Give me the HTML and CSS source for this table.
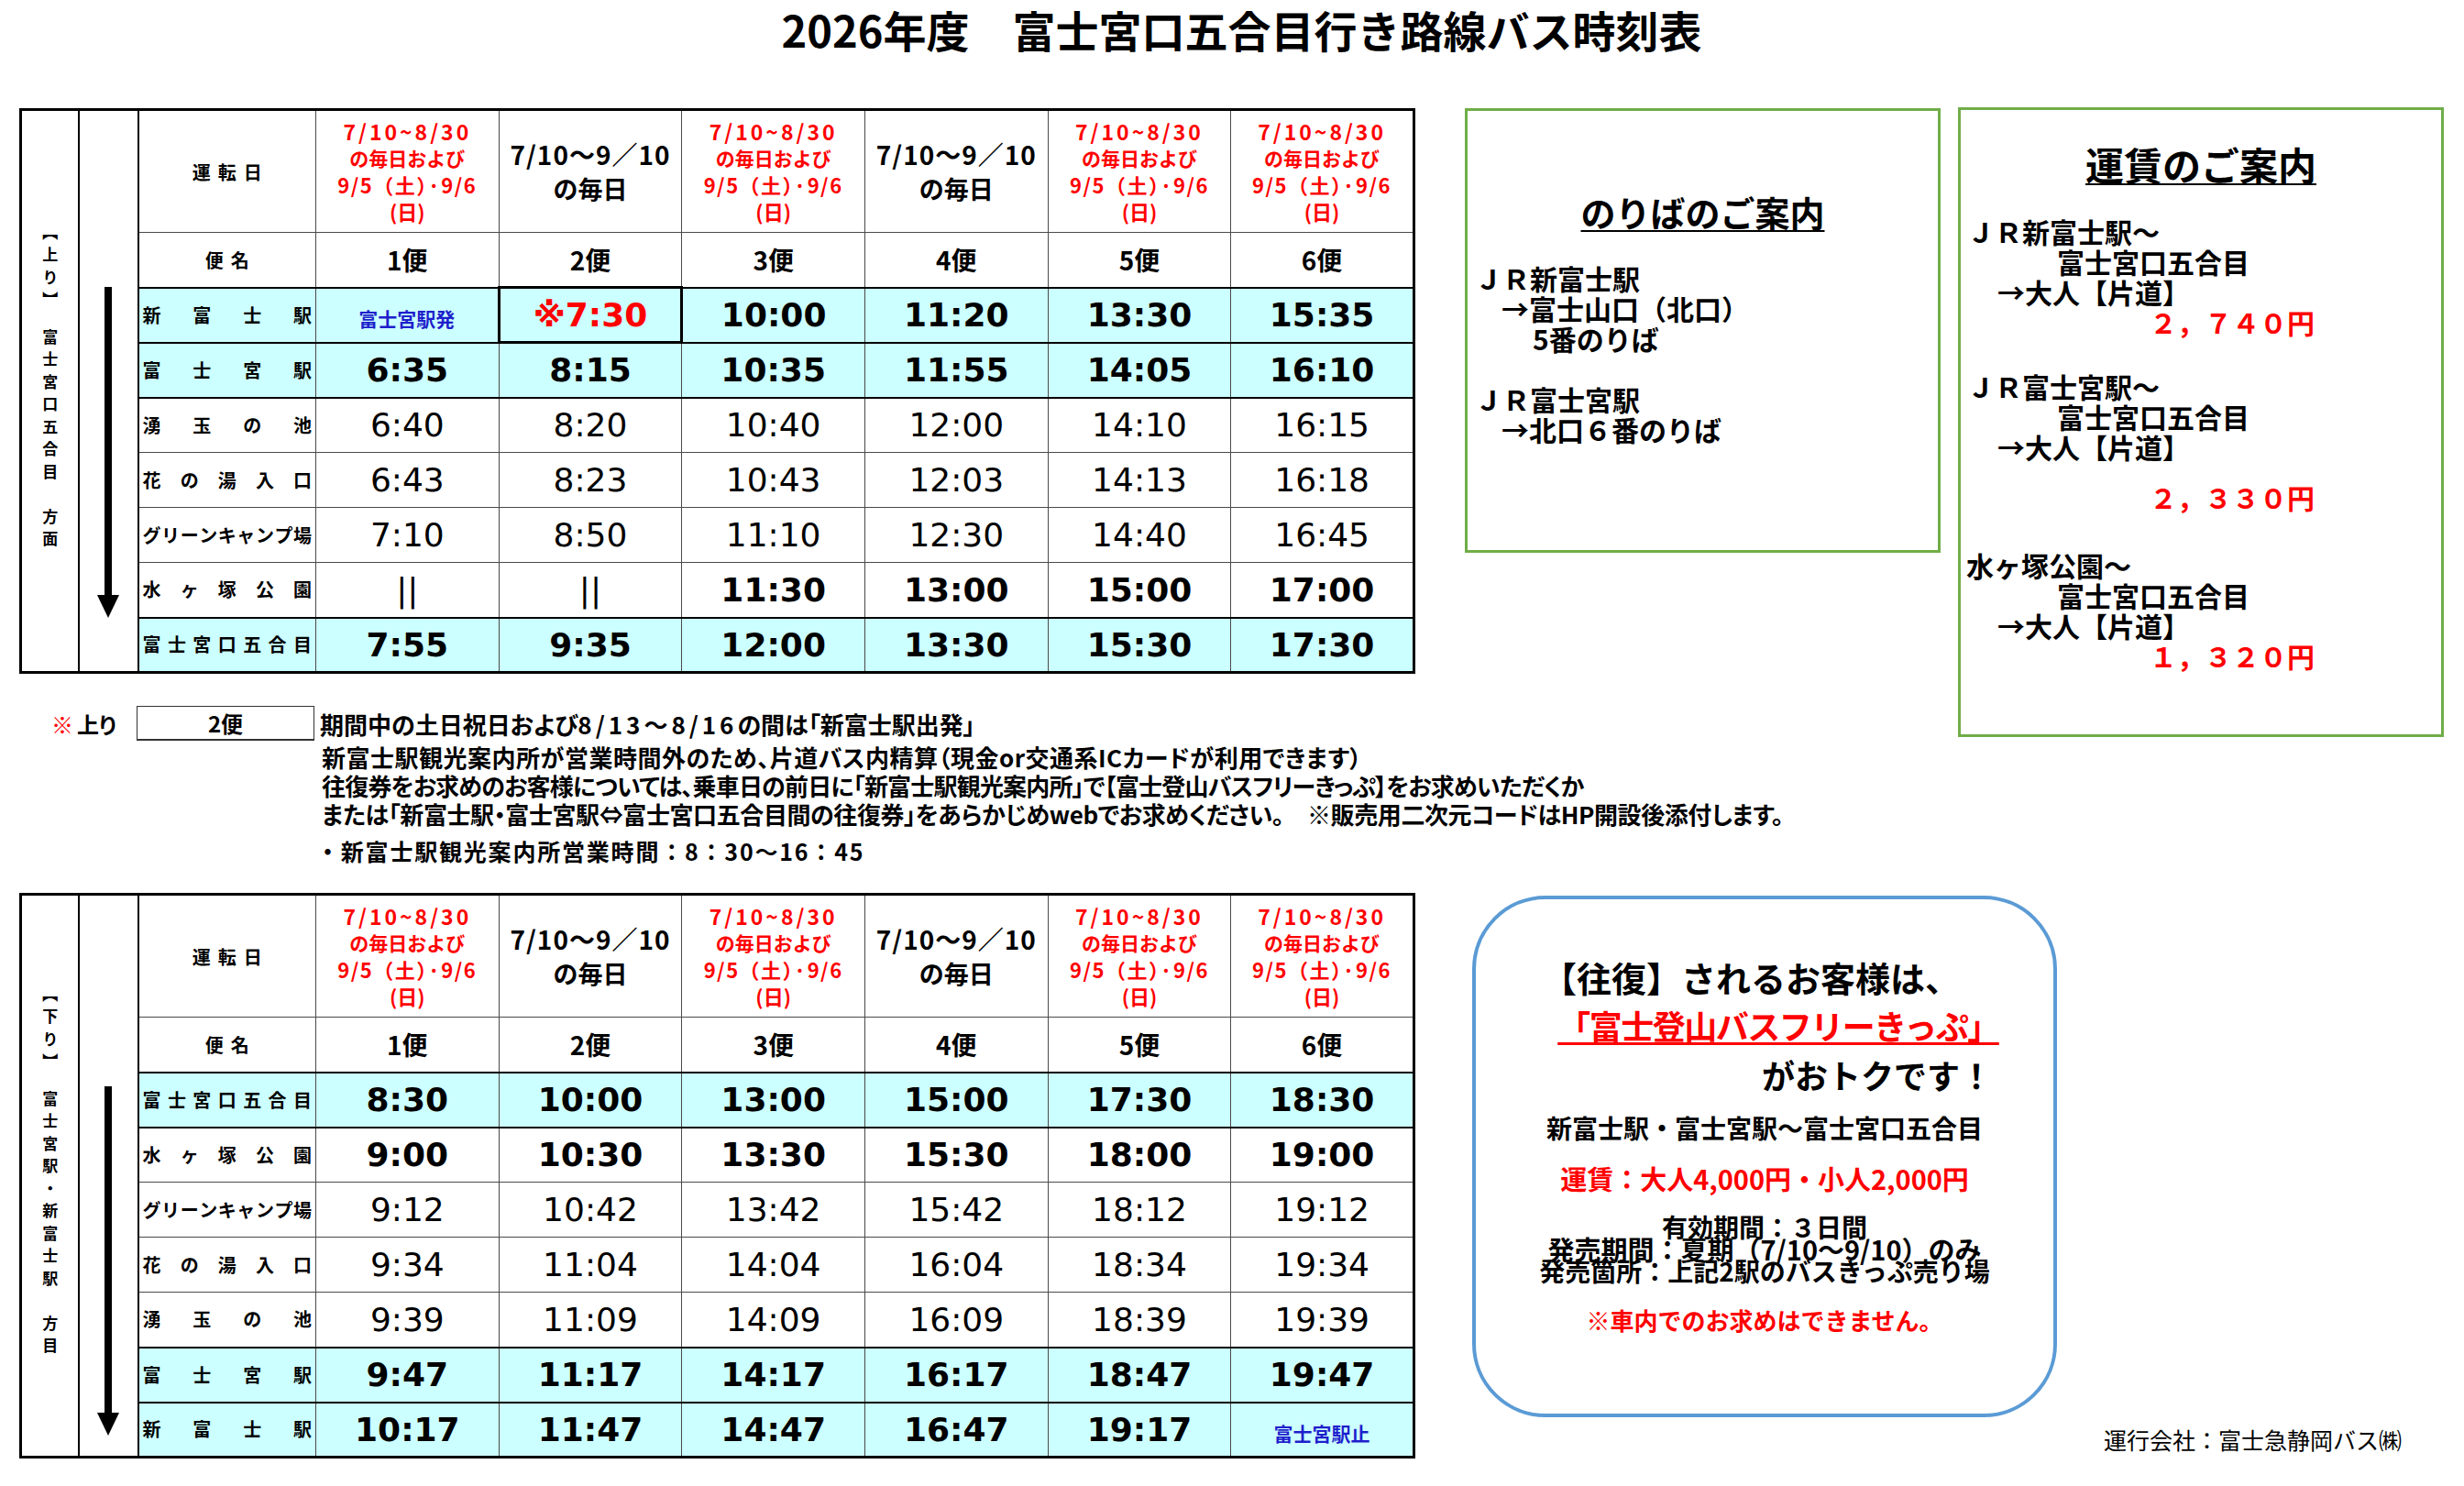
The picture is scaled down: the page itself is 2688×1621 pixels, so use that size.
FILE: index.html
```html
<!DOCTYPE html>
<html lang="ja">
<head>
<meta charset="utf-8">
<title>2026年度 富士宮口五合目行き路線バス時刻表</title>
<link rel="stylesheet" href="styles.css">
</head>
<body>
<div class="page">
  <h1 class="title">2026年度　富士宮口五合目行き路線バス時刻表</h1>

  <table class="tt up-table">
    <colgroup>
      <col class="c-dir"><col class="c-arrow"><col class="c-stn">
      <col class="c-t"><col class="c-t"><col class="c-t"><col class="c-t"><col class="c-t"><col class="c-t">
    </colgroup>
    <tr class="r-head">
      <td class="dir" rowspan="9"><span class="vtext">【上り】　富士宮口五合目　方面</span></td>
      <td class="arrow arrow-up" rowspan="9"><svg class="arr" width="24" height="361" viewBox="0 0 24 361"><rect x="8" y="0" width="8" height="340"/><polygon points="0,336 24,336 12,361"/></svg></td>
      <th class="lbl">運転日</th>
      <td class="day red"><span class="d1">7/10~8/30</span><span class="d2">の毎日および</span><span class="d3">9/5（土）·9/6</span><span class="d4">(日)</span></td>
      <td class="day"><span class="e1">7/10～9／10</span><span class="e2">の毎日</span></td>
      <td class="day red"><span class="d1">7/10~8/30</span><span class="d2">の毎日および</span><span class="d3">9/5（土）·9/6</span><span class="d4">(日)</span></td>
      <td class="day"><span class="e1">7/10～9／10</span><span class="e2">の毎日</span></td>
      <td class="day red"><span class="d1">7/10~8/30</span><span class="d2">の毎日および</span><span class="d3">9/5（土）·9/6</span><span class="d4">(日)</span></td>
      <td class="day red"><span class="d1">7/10~8/30</span><span class="d2">の毎日および</span><span class="d3">9/5（土）·9/6</span><span class="d4">(日)</span></td>
    </tr>
    <tr class="r-bin">
      <th class="lbl">便名</th><td>1便</td><td>2便</td><td>3便</td><td>4便</td><td>5便</td><td>6便</td>
    </tr>
    <tr class="r-t cy b tk">
      <th class="stn"><div class="sp"><span>新</span><span>富</span><span>士</span><span>駅</span></div></th>
      <td><span class="blue">富士宮駅発</span></td><td class="star">※7:30</td><td>10:00</td><td>11:20</td><td>13:30</td><td>15:35</td>
    </tr>
    <tr class="r-t cy b tk">
      <th class="stn"><div class="sp"><span>富</span><span>士</span><span>宮</span><span>駅</span></div></th>
      <td>6:35</td><td>8:15</td><td>10:35</td><td>11:55</td><td>14:05</td><td>16:10</td>
    </tr>
    <tr class="r-t tk">
      <th class="stn"><div class="sp"><span>湧</span><span>玉</span><span>の</span><span>池</span></div></th>
      <td>6:40</td><td>8:20</td><td>10:40</td><td>12:00</td><td>14:10</td><td>16:15</td>
    </tr>
    <tr class="r-t">
      <th class="stn"><div class="sp"><span>花</span><span>の</span><span>湯</span><span>入</span><span>口</span></div></th>
      <td>6:43</td><td>8:23</td><td>10:43</td><td>12:03</td><td>14:13</td><td>16:18</td>
    </tr>
    <tr class="r-t">
      <th class="stn"><div class="sp"><span>グ</span><span>リ</span><span>ー</span><span>ン</span><span>キ</span><span>ャ</span><span>ン</span><span>プ</span><span>場</span></div></th>
      <td>7:10</td><td>8:50</td><td>11:10</td><td>12:30</td><td>14:40</td><td>16:45</td>
    </tr>
    <tr class="r-t b">
      <th class="stn"><div class="sp"><span>水</span><span>ヶ</span><span>塚</span><span>公</span><span>園</span></div></th>
      <td class="bars">||</td><td class="bars">||</td><td>11:30</td><td>13:00</td><td>15:00</td><td>17:00</td>
    </tr>
    <tr class="r-t cy b tk">
      <th class="stn"><div class="sp"><span>富</span><span>士</span><span>宮</span><span>口</span><span>五</span><span>合</span><span>目</span></div></th>
      <td>7:55</td><td>9:35</td><td>12:00</td><td>13:30</td><td>15:30</td><td>17:30</td>
    </tr>
  </table>

  <section class="nori">
    <h2 class="box-title">のりばのご案内</h2>
    <p class="ln jr">ＪＲ新富士駅</p>
    <p class="ln i1">→富士山口（北口）</p>
    <p class="ln i2">5番のりば</p>
    <p class="ln blank">&nbsp;</p>
    <p class="ln jr">ＪＲ富士宮駅</p>
    <p class="ln i1">→北口６番のりば</p>
  </section>

  <section class="fare">
    <h2 class="fare-title">運賃のご案内</h2>
    <div class="grp g1">
      <p class="ln jr">ＪＲ新富士駅～</p>
      <p class="ln f-to">富士宮口五合目</p>
      <p class="ln f-ad">→大人【片道】</p>
      <p class="ln f-pr">２，７４０円</p>
    </div>
    <div class="grp g2">
      <p class="ln jr">ＪＲ富士宮駅～</p>
      <p class="ln f-to">富士宮口五合目</p>
      <p class="ln f-ad">→大人【片道】</p>
      <p class="ln f-pr f-gap">２，３３０円</p>
    </div>
    <div class="grp g3">
      <p class="ln f-mz">水ヶ塚公園～</p>
      <p class="ln f-to">富士宮口五合目</p>
      <p class="ln f-ad">→大人【片道】</p>
      <p class="ln f-pr">１，３２０円</p>
    </div>
  </section>

  <section class="notes">
    <div class="n-row1">
      <span class="n-mark">※</span><span class="n-up">上り</span>
      <span class="n-box">2便</span>
      <span class="n-text">期間中の土日祝日および<span class="n-num">8/13～8/16</span>の間は「新富士駅出発」</span>
    </div>
    <p class="n-line n-l2">新富士駅観光案内所が営業時間外のため、片道バス内精算（現金or交通系ICカードが利用できます）</p>
    <p class="n-line n-l3">往復券をお求めのお客様については、乗車日の前日に「新富士駅観光案内所」で【富士登山バスフリーきっぷ】をお求めいただくか</p>
    <p class="n-line n-l4">または「新富士駅・富士宮駅⇔富士宮口五合目間の往復券」をあらかじめwebでお求めください。　※販売用二次元コードはHP開設後添付します。</p>
    <p class="n-line n-last">・新富士駅観光案内所営業時間：8：30～16：45</p>
  </section>

  <table class="tt low-table">
    <colgroup>
      <col class="c-dir"><col class="c-arrow"><col class="c-stn">
      <col class="c-t"><col class="c-t"><col class="c-t"><col class="c-t"><col class="c-t"><col class="c-t">
    </colgroup>
    <tr class="r-head">
      <td class="dir" rowspan="9"><span class="vtext">【下り】　富士宮駅・新富士駅　方目</span></td>
      <td class="arrow arrow-low" rowspan="9"><svg class="arr" width="24" height="381" viewBox="0 0 24 381"><rect x="8" y="0" width="8" height="360"/><polygon points="0,356 24,356 12,381"/></svg></td>
      <th class="lbl">運転日</th>
      <td class="day red"><span class="d1">7/10~8/30</span><span class="d2">の毎日および</span><span class="d3">9/5（土）·9/6</span><span class="d4">(日)</span></td>
      <td class="day"><span class="e1">7/10～9／10</span><span class="e2">の毎日</span></td>
      <td class="day red"><span class="d1">7/10~8/30</span><span class="d2">の毎日および</span><span class="d3">9/5（土）·9/6</span><span class="d4">(日)</span></td>
      <td class="day"><span class="e1">7/10～9／10</span><span class="e2">の毎日</span></td>
      <td class="day red"><span class="d1">7/10~8/30</span><span class="d2">の毎日および</span><span class="d3">9/5（土）·9/6</span><span class="d4">(日)</span></td>
      <td class="day red"><span class="d1">7/10~8/30</span><span class="d2">の毎日および</span><span class="d3">9/5（土）·9/6</span><span class="d4">(日)</span></td>
    </tr>
    <tr class="r-bin">
      <th class="lbl">便名</th><td>1便</td><td>2便</td><td>3便</td><td>4便</td><td>5便</td><td>6便</td>
    </tr>
    <tr class="r-t cy b tk">
      <th class="stn"><div class="sp"><span>富</span><span>士</span><span>宮</span><span>口</span><span>五</span><span>合</span><span>目</span></div></th>
      <td>8:30</td><td>10:00</td><td>13:00</td><td>15:00</td><td>17:30</td><td>18:30</td>
    </tr>
    <tr class="r-t b tk">
      <th class="stn"><div class="sp"><span>水</span><span>ヶ</span><span>塚</span><span>公</span><span>園</span></div></th>
      <td>9:00</td><td>10:30</td><td>13:30</td><td>15:30</td><td>18:00</td><td>19:00</td>
    </tr>
    <tr class="r-t">
      <th class="stn"><div class="sp"><span>グ</span><span>リ</span><span>ー</span><span>ン</span><span>キ</span><span>ャ</span><span>ン</span><span>プ</span><span>場</span></div></th>
      <td>9:12</td><td>10:42</td><td>13:42</td><td>15:42</td><td>18:12</td><td>19:12</td>
    </tr>
    <tr class="r-t">
      <th class="stn"><div class="sp"><span>花</span><span>の</span><span>湯</span><span>入</span><span>口</span></div></th>
      <td>9:34</td><td>11:04</td><td>14:04</td><td>16:04</td><td>18:34</td><td>19:34</td>
    </tr>
    <tr class="r-t">
      <th class="stn"><div class="sp"><span>湧</span><span>玉</span><span>の</span><span>池</span></div></th>
      <td>9:39</td><td>11:09</td><td>14:09</td><td>16:09</td><td>18:39</td><td>19:39</td>
    </tr>
    <tr class="r-t cy b tk">
      <th class="stn"><div class="sp"><span>富</span><span>士</span><span>宮</span><span>駅</span></div></th>
      <td>9:47</td><td>11:17</td><td>14:17</td><td>16:17</td><td>18:47</td><td>19:47</td>
    </tr>
    <tr class="r-t cy b tk">
      <th class="stn"><div class="sp"><span>新</span><span>富</span><span>士</span><span>駅</span></div></th>
      <td>10:17</td><td>11:47</td><td>14:47</td><td>16:47</td><td>19:17</td><td><span class="blue">富士宮駅止</span></td>
    </tr>
  </table>

  <div class="side">
    <section class="promo">
      <p class="p1">【往復】されるお客様は、</p>
      <p class="p2">「富士登山バスフリーきっぷ」</p>
      <p class="p3">がおトクです！</p>
      <p class="p4">新富士駅・富士宮駅～富士宮口五合目</p>
      <p class="p5">運賃：大人4,000円・小人2,000円</p>
      <p class="p6">有効期間：３日間</p>
      <p class="p7">発売期間：夏期（7/10～9/10）のみ</p>
      <p class="p8">発売箇所：上記2駅のバスきっぷ売り場</p>
      <p class="p9">※車内でのお求めはできません。</p>
    </section>
    <p class="company">運行会社：富士急静岡バス㈱</p>
  </div>
</div>
</body>
</html>
```

FILE: styles.css
```css
* { box-sizing: border-box; }
html, body { margin: 0; padding: 0; background: #fff; }
body {
  color: #000;
  font-family: "Noto Sans CJK JP", "Noto Sans", sans-serif;
}
p, h1, h2 { margin: 0; }

.page {
  width: 2688px;
  height: 1621px;
  padding: 8px 0 0 21px;
  display: grid;
  grid-template-columns: 1520px 576px 549px;
  grid-template-areas:
    "title title title"
    "up nori fare"
    "notes notes fare"
    "low side side";
  align-items: start;
  align-content: start;
}

.title {
  grid-area: title;
  margin-bottom: 63px;
  padding-left: 22px;
  text-align: center;
  font-size: 47px;
  line-height: 47px;
  font-weight: 700;
}

/* ---------- timetable ---------- */
.tt {
  border-collapse: collapse;
  table-layout: fixed;
  width: 1520px;
  border: 3px solid #000;
}
.up-table { grid-area: up; }
.low-table { grid-area: low; margin-top: 30px; }
.c-dir { width: 63px; }
.c-arrow { width: 65px; }
.c-stn { width: 194px; }
.c-t { width: 199.66px; }

.tt td, .tt th {
  border: 1px solid #4a4a4a;
  padding: 0;
  text-align: center;
  vertical-align: middle;
  font-weight: 700;
}
.tt .dir, .tt .arrow { border-right: 2px solid #000; background: #fff; }
.tt .dir { vertical-align: middle; }
.vtext {
  display: inline-block;
  writing-mode: vertical-rl;
  font-size: 17px;
  line-height: 20px;
  letter-spacing: 7.5px;
  font-weight: 700;
}
.tt .arrow { vertical-align: top; }
.arrow-up { padding-top: 192px !important; }
.arrow-low { padding-top: 208px !important; }
.arr { display: block; margin: 0 auto; fill: #000; }

.r-head td, .r-head th { height: 134px; }
.r-bin td, .r-bin th { height: 60px; }
.r-t td, .r-t th { height: 60px; }
.tt .lbl { font-size: 20px; letter-spacing: 8px; padding-left: 8px; }
.r-bin td { font-size: 28px; }
.r-bin td, .r-bin th { border-bottom: 2px solid #000; }

.day span { display: block; }
.day.red { color: #ff0000; }
.day .d1, .day .d2, .day .d3, .day .d4 { line-height: 29px; }
.day .d1 { font-size: 23px; letter-spacing: 3px; }
.day .d2 { font-size: 21px; }
.day .d3 { font-size: 22px; letter-spacing: 1.5px; }
.day .d4 { font-size: 22px; }
.day .e1 { font-size: 28px; line-height: 37px; letter-spacing: 1px; }
.day .e2 { font-size: 27px; line-height: 37px; }

.r-t td {
  font-family: "DejaVu Sans", "Noto Sans CJK JP", sans-serif;
  font-size: 36px;
  font-weight: 400;
}
.r-t.b td { font-weight: 700; }
.r-t.cy td, .r-t.cy th { background: #ccffff; }
.r-t.tk td, .r-t.tk th { border-top: 2px solid #000; }
.tt td.star {
  color: #ff0000;
  border: 3px solid #000;
}
.tt td.bars { font-weight: 400; }
.blue {
  font-family: "Noto Sans CJK JP", sans-serif;
  font-size: 21px;
  font-weight: 700;
  color: #1f1fcc;
}

.stn .sp {
  display: flex;
  justify-content: space-between;
  padding: 0 4px 0 4px;
  font-size: 20px;
  line-height: 24px;
  font-weight: 700;
}

/* ---------- info boxes ---------- */
.nori {
  grid-area: nori;
  justify-self: end;
  width: 519px;
  height: 485px;
  border: 3px solid #70ad47;
  padding: 85px 0 0 14px;
  font-weight: 700;
}
.box-title {
  font-size: 38px;
  line-height: 50px;
  text-align: center;
  padding-right: 14px;
  margin-bottom: 31px;
  text-decoration: underline;
  text-decoration-thickness: 2px;
  text-underline-offset: 4px;
}
.ln {
  font-size: 30px;
  line-height: 33px;
  font-weight: 700;
  white-space: nowrap;
}
.ln.jr { margin-left: -6px; }
.nori .i1 { padding-left: 23px; }
.nori .i2 { padding-left: 57px; }

.fare {
  grid-area: fare;
  justify-self: end;
  margin-top: -1px;
  width: 530px;
  height: 687px;
  border: 3px solid #70ad47;
  padding: 34px 0 0 15px;
}
.fare-title {
  font-size: 42px;
  line-height: 50px;
  text-align: center;
  padding-right: 15px;
  font-weight: 700;
  text-decoration: underline;
  text-decoration-thickness: 2px;
  text-underline-offset: 3px;
}
.grp.g1 { margin-top: 32px; }
.grp.g2 { margin-top: 37px; }
.grp.g3 { margin-top: 41px; }
.fare .jr { margin-left: -8px; }
.fare .f-to { padding-left: 90px; }
.fare .f-ad { padding-left: 25px; }
.fare .f-pr { padding-left: 191px; color: #ff0000; }
.fare .f-gap { margin-top: 22px; }
.fare .f-mz { margin-left: -9px; }

/* ---------- notes ---------- */
.notes {
  grid-area: notes;
  margin-top: 35px;
  font-weight: 700;
  font-size: 26px;
  font-feature-settings: "palt";
}
.n-row1 {
  display: flex;
  align-items: center;
  height: 38px;
  white-space: nowrap;
}
.n-mark { color: #ff0000; margin-left: 35px; font-size: 24px; width: 28px; }
.n-up { font-size: 24px; width: 65px; }
.n-box {
  width: 194px;
  height: 38px;
  border: 1px solid #333;
  border-bottom-width: 2px;
  text-align: center;
  line-height: 35px;
  font-size: 24px;
}
.n-text { margin-left: 6px; }
.n-num { letter-spacing: 4px; }
.n-line {
  margin-left: 330px;
  line-height: 31px;
  white-space: nowrap;
}
.n-row1 + .n-line { margin-top: 2px; }
.n-l2 { letter-spacing: 0.5px; }
.n-l3 { letter-spacing: -0.8px; }
.n-l4 { letter-spacing: -0.4px; }
.n-line.n-last {
  margin-top: 10px;
  margin-left: 324px;
  font-size: 25px;
  letter-spacing: 1.8px;
  font-feature-settings: normal;
}

/* ---------- lower right ---------- */
.side {
  grid-area: side;
  margin-top: 30px;
  display: flex;
  align-items: flex-start;
  height: 615px;
}
.promo {
  margin-left: 65px;
  margin-top: 3px;
  width: 638px;
  height: 569px;
  border: 4px solid #5b9bd5;
  border-radius: 80px;
  padding-top: 58px;
  text-align: center;
  font-weight: 700;
  white-space: nowrap;
}
.promo .p1 { font-size: 38px; line-height: 54px; padding-right: 30px; }
.promo .p2 {
  font-size: 36px; line-height: 50px; letter-spacing: -1.5px; color: #ff0000;
  padding-left: 30px;
  text-decoration: underline;
  text-decoration-thickness: 3px;
  text-underline-offset: 3px;
}
.promo .p3 { font-size: 36px; line-height: 58px; text-align: right; padding-right: 66px; }
.promo .p4 { font-size: 28px; line-height: 58px; }
.promo .p5 { font-size: 29px; line-height: 52px; color: #ff0000; }
.promo .p6 { font-size: 28px; line-height: 24px; margin-top: 15px; }
.promo .p7 { font-size: 29px; line-height: 24px; }
.promo .p8 { font-size: 28px; line-height: 24px; }
.promo .p9 { font-size: 26px; line-height: 48px; margin-top: 18px; color: #ff0000; }

.company {
  align-self: flex-end;
  margin-left: auto;
  margin-right: 46px;
  margin-bottom: 4px;
  font-size: 25px;
  line-height: 30px;
  white-space: nowrap;
}
```
